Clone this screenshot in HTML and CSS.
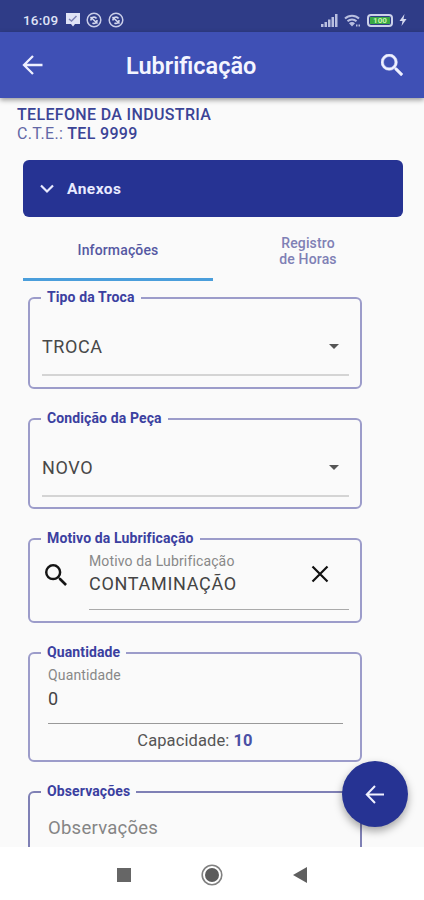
FILE: index.html
```html
<!DOCTYPE html>
<html lang="pt-BR">
<head>
<meta charset="UTF-8">
<meta name="viewport" content="width=device-width, initial-scale=1.0">
<title>Lubrificação</title>
<link rel="stylesheet" href="styles.css">
</head>
<body>
<div class="status-bar">
  <span class="clock">16:09</span>
  <svg class="st-msg" width="14" height="14" viewBox="0 0 14 14"><path d="M0 0h14v11H9l-2 2.500L5 11H0z" fill="#dfe3f6"/><path d="M3 6l2.500 2L10.500 3" fill="none" stroke="#7d82b5" stroke-width="1.500"/></svg>
  <svg class="st-app" width="16" height="16" viewBox="0 0 16 16"><circle cx="8" cy="8" r="6.800" fill="none" stroke="#c9cde8" stroke-width="1.500"/><path d="M5 8.500a3 3 0 0 1 5.500-2M4.500 5l7 6.500M11 8a3 3 0 0 1-4.500 3" fill="none" stroke="#d5d9ef" stroke-width="1.600"/></svg>
  <svg class="st-app" width="16" height="16" viewBox="0 0 16 16"><circle cx="8" cy="8" r="6.800" fill="none" stroke="#c9cde8" stroke-width="1.500"/><path d="M5 8.500a3 3 0 0 1 5.500-2M4.500 5l7 6.500M11 8a3 3 0 0 1-4.500 3" fill="none" stroke="#d5d9ef" stroke-width="1.600"/></svg>
  <div class="status-right">
    <svg width="17" height="13" viewBox="0 0 17 13" fill="#b9bfe0"><path d="M0 10h2.500v3H0zM3.500 8H6v5H3.500zM7 5.500h2.500V13H7zM10.500 3H13v10h-2.500zM14 0h2.500v13H14z"/></svg>
    <svg width="17" height="13" viewBox="0 0 17 13" fill="none" stroke="#b9bfe0" stroke-width="2"><path d="M1 4.500a10 10 0 0 1 14 0M3.500 7.300a6.500 6.500 0 0 1 9 0"/><path d="M5 9.300a4.200 4.200 0 0 1 6 0L8 12.500z" fill="#b9bfe0" stroke="none"/><path d="M12 11.500h4" stroke-dasharray="1.500 1"/></svg>
    <span class="battery"><span>100</span></span>
    <svg width="8" height="12" viewBox="0 0 8 12"><path d="M5.500 0L.5 7h3L2.500 12 7.500 5h-3z" fill="#d5d9ef"/></svg>
  </div>
</div>

<header class="app-bar">
  <svg class="back" width="22" height="20" viewBox="0 0 22 20"><path d="M20.500 10H2M11 1L2 10l9 9" fill="none" stroke="#eef0ff" stroke-width="2.300"/></svg>
  <h1>Lubrificação</h1>
  <svg class="search" width="22" height="22" viewBox="3 3 17.500 17.500"><path fill="#eef0ff" stroke="#eef0ff" stroke-width=".4" d="M15.500 14h-.79l-.28-.27A6.470 6.470 0 0 0 16 9.500 6.500 6.500 0 1 0 9.500 16c1.610 0 3.090-.59 4.230-1.570l.27.28v.79l5 4.990L20.490 19l-4.990-5zm-6 0C7.010 14 5 11.990 5 9.500S7.010 5 9.500 5 14 7.010 14 9.500 11.990 14 9.500 14z"/></svg>
</header>

<main class="content">
  <div class="equip">
    <p class="equip-name">TELEFONE DA INDUSTRIA</p>
    <p><span class="cte">C.T.E.:</span> TEL 9999</p>
  </div>

  <div class="anexos">
    <svg width="14" height="10" viewBox="0 0 14 10"><path d="M1 1.500l6 6 6-6" fill="none" stroke="#e8eaff" stroke-width="2.200"/></svg>
    <span>Anexos</span>
  </div>

  <nav class="tabs">
    <div class="tab active">Informações</div>
    <div class="tab">Registro<br>de Horas</div>
  </nav>

  <form class="fields">
    <fieldset class="box box-tipo">
      <legend>Tipo da Troca</legend>
      <div class="select"><span>TROCA</span><i class="caret"></i></div>
    </fieldset>

    <fieldset class="box box-cond">
      <legend>Condição da Peça</legend>
      <div class="select"><span>NOVO</span><i class="caret"></i></div>
    </fieldset>

    <fieldset class="box box-motivo">
      <legend>Motivo da Lubrificação</legend>
      <div class="lookup">
        <svg class="lupa" width="22" height="22" viewBox="3 3 17.500 17.500"><path fill="#151515" d="M15.500 14h-.79l-.28-.27A6.470 6.470 0 0 0 16 9.500 6.500 6.500 0 1 0 9.500 16c1.610 0 3.090-.59 4.230-1.570l.27.28v.79l5 4.990L20.490 19l-4.990-5zm-6 0C7.010 14 5 11.990 5 9.500S7.010 5 9.500 5 14 7.010 14 9.500 11.990 14 9.500 14z"/></svg>
        <div class="lookup-input">
          <div>
            <div class="label">Motivo da Lubrificação</div>
            <div class="value">CONTAMINAÇÃO</div>
          </div>
          <svg class="clear" width="18" height="18" viewBox="0 0 18 18"><path d="M1.500 1.500l15 15M16.500 1.500l-15 15" stroke="#111" stroke-width="2.200"/></svg>
        </div>
      </div>
    </fieldset>

    <fieldset class="box box-qtd">
      <legend>Quantidade</legend>
      <div class="number">
        <div class="label">Quantidade</div>
        <div class="value">0</div>
      </div>
      <div class="capacity">Capacidade: <b>10</b></div>
    </fieldset>

    <fieldset class="box box-obs">
      <legend>Observações</legend>
      <div class="placeholder">Observações</div>
    </fieldset>
  </form>
</main>

<div class="fab">
  <svg width="20" height="19" viewBox="0 0 20 19"><path d="M19 9.500H2M10 1L1.800 9.500 10 18" fill="none" stroke="#f0f1ff" stroke-width="2"/></svg>
</div>

<footer class="nav-bar">
  <svg width="14" height="14" viewBox="0 0 14 14"><path d="M0 0h14v14H0z" fill="#666"/></svg>
  <svg width="22" height="22" viewBox="0 0 22 22"><circle cx="11" cy="11" r="9.800" fill="none" stroke="#808080" stroke-width="1.600"/><circle cx="11" cy="11" r="7" fill="#5c5c5c"/></svg>
  <svg width="14" height="16" viewBox="0 0 14 16"><path d="M14 0v16L0 8z" fill="#5f5f5f"/></svg>
</footer>
</body>
</html>
```

FILE: styles.css
```css
* {box-sizing:border-box;}
body {margin:0;width:424px;height:900px;overflow:hidden;display:flex;flex-direction:column;position:relative;font-family:Roboto, "Liberation Sans", sans-serif;background:#fafafa;color:#444;}
svg {display:block;flex:none;}
p, h1 {margin:0;}

.status-bar {height:32px;flex:none;display:flex;align-items:center;padding:8px 17px 0 23px;background:#2f3c87;}
.clock {font-size:13.5px;font-weight:500;letter-spacing:.2px;color:#dfe3f6;width:43px;}
.st-msg {margin-right:6px;}
.st-app {margin-right:5.5px;}
.status-right {margin-left:auto;display:flex;align-items:center;gap:6px;}
.battery {width:26px;height:13px;border:2px solid #cdd2ea;border-radius:4px;padding:1px;display:flex;}
.battery span {flex:1;background:#39a845;color:#c6f5a8;font-size:8px;line-height:7px;font-weight:700;text-align:center;}

.app-bar {height:66px;flex:none;display:flex;align-items:center;padding:0 21px 0 22px;background:#3f50b5;box-shadow:0 2px 5px rgba(0,0,0,.4);z-index:1;}
.app-bar h1 {flex:1;margin-left:82px;padding-top:1px;font-size:23.5px;font-weight:600;color:#f4f5ff;}

.content {flex:1;min-height:0;overflow:hidden;}
.equip {padding:7px 17px 0;font-size:16px;line-height:19px;letter-spacing:.34px;color:#3b4496;font-weight:500;}
.cte {font-weight:400;color:#6267a5;}

.anexos {height:57px;margin:17px 21px 0 23px;padding-left:17px;display:flex;align-items:center;gap:13px;border-radius:6px;background:#263393;color:#e8eaff;font-size:15.5px;font-weight:700;letter-spacing:.5px;}

.tabs {display:flex;margin:0 21px 0 23px;height:64px;}
.tab {flex:1;display:flex;align-items:center;justify-content:center;text-align:center;font-size:14px;line-height:16px;font-weight:500;letter-spacing:.15px;color:#7f80b5;padding-top:4px;}
.tab.active {color:#5558a2;border-bottom:3px solid #4a9edb;}

.fields {width:334px;margin:9px 0 0 28px;display:flex;flex-direction:column;gap:22px;}
.box {margin:0;min-width:0;padding:0 11px;border:2px solid #9c9cca;border-radius:6px;}
.box legend {padding:0 6px 2px;font-size:14px;line-height:14px;letter-spacing:.12px;font-weight:700;color:#3b40a0;}
.box-tipo {height:99px;}
.box-cond {height:98px;}
.box-motivo {height:92px;}
.box-qtd {height:117px;}
.box-obs {height:117px;border-color:#7f80b5;}

.select {height:70px;margin-left:1px;padding:13px 10px 0 0;display:flex;align-items:center;justify-content:space-between;border-bottom:2px solid #d4d4d4;font-size:18px;letter-spacing:.6px;color:#484848;}
.box-cond .select {padding-top:12px;}
.caret {border:5.5px solid transparent;border-top-color:#555;border-bottom:0;}

.label {font-size:14px;line-height:16px;letter-spacing:.14px;color:#888;}
.value {font-size:18px;line-height:22px;letter-spacing:.7px;color:#444;}
.lookup {display:flex;}
.lupa {margin:17px 22px 0 4px;}
.lookup-input {flex:1;height:63px;padding:6px 20px 0 0;display:flex;justify-content:space-between;border-bottom:1px solid #aaa;}
.lookup-input .value {margin-top:4px;}
.clear {margin-top:12px;}

.number {margin:0 6px 0 7px;height:63px;padding-top:6px;border-bottom:1px solid #999;}
.number .value {margin-top:5px;}
.capacity {text-align:center;font-size:16.5px;line-height:20px;letter-spacing:.1px;margin-top:7px;color:#555;}
.capacity b {color:#4a50a5;}
.placeholder {margin:17px 0 0 7px;font-size:18.5px;line-height:22px;letter-spacing:.25px;color:#858585;}

/* floats over the form */
.fab {position:absolute;left:342px;top:761px;width:66px;height:66px;border-radius:50%;display:flex;align-items:center;justify-content:center;background:#263393;box-shadow:0 4px 8px rgba(0,0,0,.35);}

.nav-bar {height:53px;flex:none;display:flex;align-items:center;justify-content:space-between;padding:2px 117px 0 117px;background:#fff;}
```
